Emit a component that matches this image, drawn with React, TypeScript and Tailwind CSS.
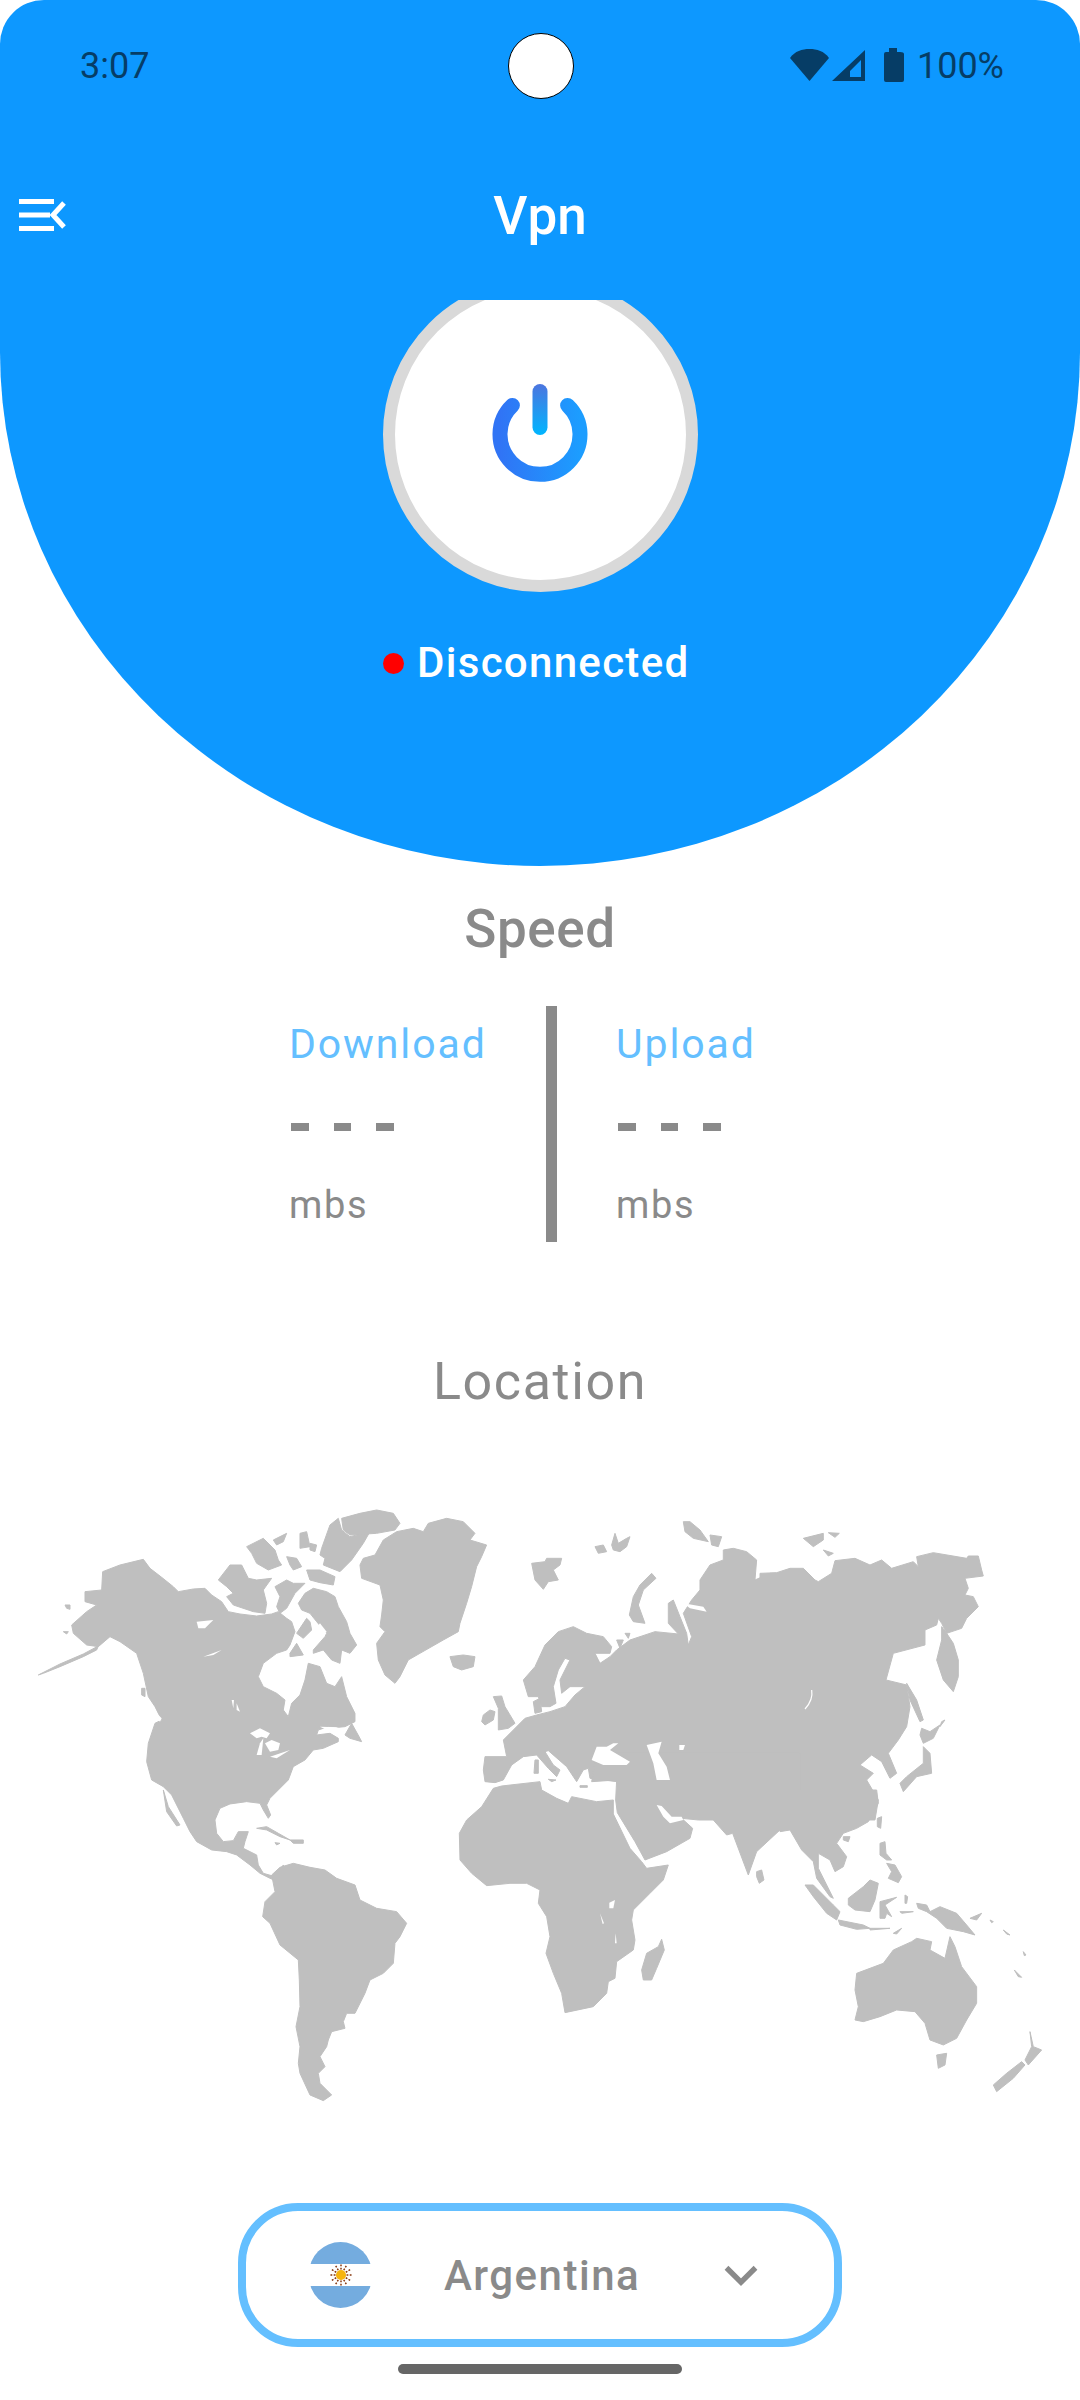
import { ChevronDown } from "lucide-react";

// land outlines traced per region, each list in the coordinates of its own crop (3x)
const regions = [
  {
    x: 30,
    y: 1490,
    land: [
      "218,245 270,225 340,208 360,235 395,262 430,290 445,305 490,297 525,295 545,315 575,335 595,365 630,372 680,378 725,372 745,365 770,385 785,395 795,425 780,465 770,480 740,490 700,520 685,560 700,590 740,610 765,630 760,660 775,680 785,640 810,615 825,570 835,520 870,530 890,580 915,590 935,560 950,620 975,670 975,695 945,710 925,712 895,710 865,720 860,735 900,730 925,745 925,755 880,775 850,780 825,810 790,830 775,870 745,900 720,925 710,945 722,975 715,985 700,960 690,940 650,935 600,942 570,955 555,990 560,1030 580,1055 610,1052 625,1025 655,1025 645,1055 640,1075 680,1095 685,1125 700,1150 735,1160 760,1125 800,1200 720,1165 690,1150 660,1125 620,1095 590,1085 545,1080 500,1055 480,1025 460,985 425,915 400,890 365,870 350,815 355,760 375,700 395,690 375,650 355,620 340,550 320,490 270,455 240,440 205,470 170,465 130,430 125,405 170,365 200,345 165,335 165,305 215,300",
      "25,555 90,522 160,492 205,468 200,480 160,500 90,530 40,550",
      "565,270 600,225 635,225 655,265 680,270 725,265 700,300 710,340 705,370 670,365 610,345 590,320 610,310 590,290",
      "735,290 770,270 790,280 825,280 795,310 770,355 750,370 740,350 750,320",
      "805,340 825,310 850,295 890,305 915,320 925,350 950,395 960,430 980,465 960,490 935,480 930,520 905,510 880,480 850,490 850,480 885,440 890,430 860,395 840,370 815,360",
      "800,430 830,385 840,395 845,420 820,445",
      "780,490 800,460 820,495 780,500",
      "650,170 700,145 735,180 745,210 755,225 715,240 680,220 665,190",
      "730,150 770,130 760,155 740,165",
      "770,200 800,205 815,230 790,240 780,225",
      "810,130 830,125 840,170 810,175",
      "840,160 860,165 855,185 840,180",
      "830,240 870,240 915,260 910,285 870,278 840,270",
      "875,175 900,105 925,85 935,120 960,140 1020,125 1000,160 965,210 930,245 880,225 885,205 870,195",
      "935,85 990,70 1040,60 1090,70 1110,100 1095,120 1040,130 960,135 940,120",
      "1000,205 1035,195 1060,150 1100,125 1150,115 1180,125 1195,100 1250,85 1300,95 1335,130 1320,150 1370,165 1355,200 1340,230 1325,290 1310,340 1290,400 1285,425 1240,450 1170,490 1135,510 1110,560 1095,580 1065,555 1045,510 1040,460 1065,425 1050,410 1055,375 1060,330 1050,285 995,265 990,225",
      "1260,500 1300,495 1335,500 1330,530 1295,540 1270,530",
      "105,345 120,345 120,358 110,355",
      "100,425 115,425 110,432",
      "335,595 345,595 345,620 335,615",
      "400,900 415,950 450,1005 440,1008 410,965",
      "680,1015 710,1010 745,1030 780,1050 750,1040 710,1020",
      "780,1050 820,1050 820,1060 790,1060",
      "735,1058 750,1060 740,1065",
      "945,735 965,700 990,745 995,755 960,745",
    ],
    water: [
      "660,730 690,715 720,730 710,745 695,740 680,745",
      "690,760 700,745 695,795 680,795",
      "705,760 725,750 750,760 745,780 720,785",
      "720,800 780,780 740,805",
      "500,395 550,390 525,415 505,415",
      "520,500 575,480 550,495",
      "605,630 612,630 610,655",
      "620,640 630,665 620,660",
      "360,650 395,685 390,695 365,665",
      "870,710 925,712 895,722",
      "870,400 890,425 870,445 850,425",
    ],
  },
  {
    x: 200,
    y: 1780,
    land: [
      "215,285 240,262 280,250 330,262 375,270 410,295 465,315 480,360 530,385 590,395 620,430 600,470 585,490 580,550 550,580 510,600 495,640 465,700 440,700 430,725 435,745 395,755 385,780 380,800 360,830 375,860 355,880 360,910 395,945 370,962 330,945 300,880 295,850 300,800 288,740 300,680 298,600 295,540 240,495 210,430 188,410 195,365 225,335",
    ],
    water: [],
  },
  {
    x: 470,
    y: 1490,
    land: [
      "45,800 110,800 100,750 130,720 165,685 200,675 240,665 285,650 315,615 345,590 300,590 275,610 270,570 300,510 285,505 265,540 250,590 258,640 240,650 215,650 205,620 175,620 160,570 195,530 225,465 265,425 310,410 350,430 400,440 425,470 420,490 375,490 390,520 420,500 440,480 480,450 555,425 625,432 595,400 595,340 610,330 630,380 650,430 655,465 665,440 640,370 665,330 690,300 690,270 720,225 760,210 760,180 790,175 830,185 860,210 855,270 900,250 960,250 960,900 600,900 440,875 360,865 355,835 340,840 320,875 290,830 235,782 225,785 250,825 270,840 260,860 235,835 200,795 160,800 125,825 100,870 75,878 45,875 40,840",
      "40,675 60,660 75,665 70,690 45,705 35,695",
      "70,620 95,618 105,650 135,700 115,715 85,720 85,690 85,655",
      "190,635 210,625 215,665 195,670",
      "185,220 225,215 230,205 275,205 270,225 250,240 265,270 235,275 220,298 195,270",
      "375,170 400,165 410,185 385,190",
      "425,165 435,130 445,160 470,145 480,140 470,170 450,185 430,180",
      "510,285 545,250 558,265 520,300 505,345 525,400 490,395 478,375 490,320",
      "640,95 660,95 690,120 715,155 670,145 645,125",
      "720,135 755,140 745,170 725,165",
      "440,450 460,450 450,475",
      "465,430 480,430 475,445",
      "195,810 205,810 205,850 192,850",
      "235,868 258,870 245,875",
    ],
    water: [
      "365,810 380,770 410,770 430,760 445,760 420,780 480,815 470,825 400,825",
      "530,765 575,755 565,790 590,830 600,870 560,870 550,820",
      "628,765 645,765 640,780 628,780",
      "640,340 700,350 710,365 660,355",
    ],
  },
  {
    x: 760,
    y: 1490,
    land: [
      "0,250 50,248 90,235 130,235 165,270 175,275 215,250 225,212 285,205 330,225 365,210 395,235 460,215 475,230 470,200 520,188 620,205 625,198 655,198 665,240 670,258 615,265 625,295 615,315 640,320 655,350 620,385 605,415 560,430 545,400 535,385 530,405 495,420 495,465 400,490 378,570 440,585 450,650 440,710 415,750 385,790 410,850 390,865 365,815 335,795 300,825 340,850 320,870 355,930 345,990 0,990",
      "545,410 560,430 580,460 595,510 595,560 580,605 550,570 530,510 545,450",
      "440,580 470,630 490,690 480,695 450,630",
      "485,715 510,725 540,705 520,745 490,760 480,735",
      "490,770 510,790 515,850 470,860 430,905 420,880 440,860 490,820",
      "545,695 555,690 540,710",
      "130,145 190,130 190,150 160,170",
      "205,128 238,130 225,142",
      "190,180 220,190 205,198",
    ],
    water: [],
  },
  {
    x: 450,
    y: 1720,
    land: [
      "95,260 130,205 155,198 270,185 275,210 320,235 355,250 365,230 440,245 490,240 490,282 540,385 575,425 590,445 655,435 640,480 600,520 550,570 545,600 555,660 550,690 500,725 495,775 475,785 470,820 430,860 345,878 335,820 310,760 288,700 300,650 290,590 265,550 270,510 230,490 180,490 110,497 65,460 30,420 28,340 50,300",
      "635,658 643,690 620,745 605,780 580,780 575,750 590,700 625,680",
      "425,185 500,180 497,240 502,278 555,365 585,420 650,395 720,355 728,325 695,295 745,300 790,300 830,345 848,340 895,465 920,395 990,330 1020,325 1050,365 1050,100 440,100",
      "920,455 935,450 942,480 928,490 920,470",
      "390,197 412,197 412,202 390,202",
    ],
    water: [
      "620,255 635,258 665,290 695,290 700,300 660,310 640,290",
      "478,548 495,540 490,565 478,565",
      "450,580 462,610 458,612",
      "497,640 500,670 495,670",
    ],
  },
  {
    x: 780,
    y: 1790,
    land: [
      "0,0 290,0 295,40 265,95 230,115 190,130 170,160 200,200 190,230 165,245 150,210 115,190 115,235 160,325 150,320 110,265 100,215 65,180 30,120 0,125",
      "190,140 210,140 205,155 190,150",
      "292,85 305,80 302,115 292,110",
      "300,160 315,155 318,190 335,210 320,210 300,195",
      "320,220 345,225 365,260 355,278 325,265 335,245",
      "205,325 250,290 270,270 295,280 285,330 270,365 225,360 205,345",
      "300,335 350,322 315,345 335,380 320,370 315,385 300,385",
      "75,285 100,285 160,345 180,365 170,390 140,370 100,320",
      "175,390 250,405 270,415 230,418 180,405",
      "270,415 330,415 270,420",
      "340,430 365,415 350,432",
      "375,315 383,320 380,340 375,340",
      "360,365 400,365 365,370",
      "410,340 440,345 450,365 480,350 530,370 560,405 585,435 550,425 500,415 470,385 440,365 415,355",
      "570,385 605,370 590,390",
      "630,390 640,395 635,398",
      "670,420 690,435 680,432",
      "703,540 725,562 715,560",
      "730,485 738,495 733,497",
      "230,550 310,520 340,480 395,455 410,445 455,455 450,480 495,505 510,440 525,470 545,530 590,590 590,640 560,690 530,745 490,765 450,750 435,700 405,665 350,660 300,680 250,695 225,690 235,650 225,600",
      "470,795 500,790 495,825 475,835",
      "640,885 680,850 725,815 735,825 700,865 650,905",
      "750,725 760,770 785,780 745,825 735,810 755,770",
    ],
    water: [],
  },
];

function WorldMap() {
  return (
    <svg viewBox="0 1450 1080 670" className="block h-[670px] w-[1080px]">
      {regions.map((r) => (
        <g
          key={`${r.x}-${r.y}`}
          transform={`translate(${r.x} ${r.y}) scale(0.3333)`}
          fill="#bfbfbf"
          stroke="#bfbfbf"
          strokeWidth="3"
          strokeLinejoin="round"
        >
          {r.land.map((p) => (
            <polygon key={p} points={p} />
          ))}
        </g>
      ))}
      {/* seas go on top, the land pieces overlap each other */}
      {regions.map((r) => (
        <g key={`w-${r.x}-${r.y}`} transform={`translate(${r.x} ${r.y}) scale(0.3333)`} fill="#ffffff">
          {r.water.map((p) => (
            <polygon key={p} points={p} />
          ))}
        </g>
      ))}
      <path d="M811.7 1690 Q813.3 1700 805 1709" fill="none" stroke="#ffffff" strokeWidth="1.2" />
    </svg>
  );
}

function PowerIcon() {
  return (
    <svg viewBox="0 0 110 110" className="h-[110px] w-[110px]">
      <defs>
        <linearGradient id="ring" x1="0" y1="0" x2="1" y2="0">
          <stop offset="0" stopColor="#3074f5" />
          <stop offset="1" stopColor="#1c9dff" />
        </linearGradient>
        <linearGradient id="bar" gradientUnits="userSpaceOnUse" x1="55" y1="4" x2="55" y2="55">
          <stop offset="0" stopColor="#4c75df" />
          <stop offset="1" stopColor="#00b6ff" />
        </linearGradient>
      </defs>
      <path
        d="M27.4 25.4A40 40 0 1 0 82.6 25.4"
        fill="none"
        stroke="url(#ring)"
        strokeWidth="15"
        strokeLinecap="round"
      />
      <line x1="55" y1="11.5" x2="55" y2="47.5" stroke="url(#bar)" strokeWidth="15" strokeLinecap="round" />
    </svg>
  );
}

function StatusIcons() {
  return (
    <svg viewBox="0 0 120 36" className="h-[36px] w-[120px]" fill="#063d66">
      <path d="M2 10C7 3 14 1 21.5 1S36 3 41 10L21.5 33Z" />
      <path fillRule="evenodd" d="M77 2V33H44ZM73 12L62 23V29H73Z" />
      <path d="M96 6Q96 4 98 4H101V0H109V4H112Q116 4 116 6V32Q116 34 114 34H98Q96 34 96 32Z" />
    </svg>
  );
}

function Sun() {
  const rays = [0, 30, 60, 90, 120, 150];
  return (
    <svg viewBox="0 0 24 24" className="h-[22px] w-[22px]">
      {rays.map((a) => (
        <line
          key={a}
          x1="12"
          y1="0.5"
          x2="12"
          y2="23.5"
          stroke="#85340a"
          strokeWidth="1.6"
          strokeDasharray="2 1.5"
          transform={`rotate(${a} 12 12)`}
        />
      ))}
      <circle cx="12" cy="12" r="5.5" fill="#f6b40e" />
    </svg>
  );
}

function SpeedColumn({ label }: { label: string }) {
  return (
    <div className="flex flex-col">
      <span className="mt-[13px] text-[41px] leading-[50px] tracking-[1.9px] text-[#64bfff]">{label}</span>
      <div className="mt-[54px] flex gap-[25px] pl-[2px]">
        <span className="h-[8px] w-[18px] bg-[#8a8a8a]" />
        <span className="h-[8px] w-[17px] bg-[#8a8a8a]" />
        <span className="h-[8px] w-[18px] bg-[#8a8a8a]" />
      </div>
      <span className="mt-[51px] text-[38px] leading-[46px] tracking-[1.7px] text-[#8a8a8a]">mbs</span>
    </div>
  );
}

export default function App() {
  return (
    <div className="h-[2400px] w-[1080px] overflow-hidden bg-white font-[Roboto,sans-serif]">
      {/* blue header */}
      <header className="h-[866px] w-full rounded-t-[44px] rounded-br-[540px_514px] rounded-bl-[540px_514px] bg-[#0d98ff]">
        <div className="flex h-[132px] items-center px-[78px]">
          <span className="flex-1 pl-[2px] text-[36px] text-[#063d66]">3:07</span>
          <span className="h-[66px] w-[66px] rounded-full border-[1.5px] border-black bg-white" />
          <div className="flex flex-1 items-center justify-end gap-[9px]">
            <StatusIcons />
            <span className="-mr-[2px] text-[36px] text-[#063d66]">100%</span>
          </div>
        </div>

        <div className="relative flex h-[168px] items-center justify-center pt-[2px]">
          <svg viewBox="0 0 50 34" className="absolute top-[67px] left-[18px] h-[34px] w-[50px]">
            <path d="M1 2.5H36M1 16H32M1 29.5H36" stroke="#fff" strokeWidth="5" />
            <path d="M46 4L35 16L46 28" stroke="#fff" strokeWidth="5" fill="none" />
          </svg>
          <span className="text-[53px] font-medium text-white">Vpn</span>
        </div>

        <div className="flex h-[292px] justify-center overflow-hidden">
          <div className="-mt-[23px] flex h-[315px] w-[315px] shrink-0 items-center justify-center rounded-full border-[12px] border-[#d9d9d9] bg-white">
            <PowerIcon />
          </div>
        </div>

        <div className="mt-[46px] flex items-center gap-[13px] pl-[383px]">
          <span className="h-[21px] w-[21px] rounded-full bg-[#ff0000]" />
          <span className="text-[42px] leading-[50px] font-medium tracking-[1.3px] text-white">Disconnected</span>
        </div>
      </header>

      {/* speed */}
      <h2 className="mt-[33px] text-center text-[53px] leading-[60px] font-medium tracking-[0.6px] text-[#8a8a8a]">
        Speed
      </h2>
      <div className="mt-[47px] flex h-[236px] pl-[289px]">
        <div className="w-[257px]">
          <SpeedColumn label="Download" />
        </div>
        <span className="h-full w-[11px] bg-[#8a8a8a]" />
        <div className="pl-[59px]">
          <SpeedColumn label="Upload" />
        </div>
      </div>

      {/* location */}
      <h2 className="mt-[108px] text-center text-[52px] leading-[64px] tracking-[1.6px] text-[#8a8a8a]">Location</h2>

      <div className="mt-[36px]">
        <WorldMap />
      </div>

      {/* country picker */}
      <div className="mt-[83px] ml-[238px] flex h-[144px] w-[604px] items-center rounded-[60px] border-[8px] border-[#64bfff]">
        <div className="ml-[63px] flex h-[66px] w-[63px] flex-col overflow-hidden rounded-full">
          <div className="h-[22px] bg-[#74acdf]" />
          <div className="flex h-[22px] items-center justify-center bg-white">
            <Sun />
          </div>
          <div className="h-[22px] bg-[#74acdf]" />
        </div>
        <span className="ml-[72px] text-[42px] font-medium tracking-[1.5px] text-[#8a8a8a]">Argentina</span>
        <ChevronDown
          className="ml-[72px] h-[58px] w-[58px] text-[#8a8a8a]"
          strokeWidth={2.2}
          strokeLinecap="butt"
          strokeLinejoin="miter"
        />
      </div>

      <div className="mx-auto mt-[17px] h-[10px] w-[284px] rounded-full bg-[#666666]" />
    </div>
  );
}
